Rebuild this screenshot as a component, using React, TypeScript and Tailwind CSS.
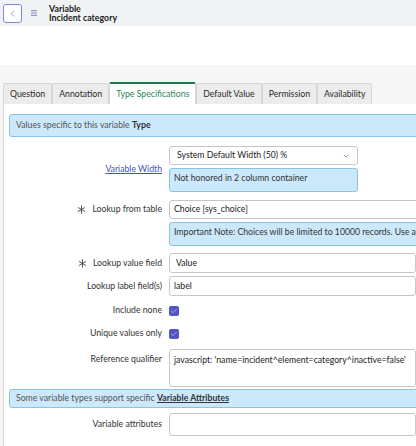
import { ChevronLeft, ChevronDown, Menu, Check } from "lucide-react";

const tabs = [
  "Question",
  "Annotation",
  "Type Specifications",
  "Default Value",
  "Permission",
  "Availability",
];

function Req() {
  return (
    <svg viewBox="0 0 10 10" className="w-[9px] h-[9px] mr-[6px] text-[#444]">
      <g stroke="currentColor" strokeWidth="1" strokeLinecap="round">
        <line x1="5" y1="0.8" x2="5" y2="9.2" />
        <line x1="1.4" y1="2.9" x2="8.6" y2="7.1" />
        <line x1="1.4" y1="7.1" x2="8.6" y2="2.9" />
      </g>
    </svg>
  );
}

function Label({ children, required }: { children: React.ReactNode; required?: boolean }) {
  return (
    <div className="w-[165px] shrink-0 flex items-center justify-end pr-[7px] text-[#333]">
      {required && <Req />}
      <span>{children}</span>
    </div>
  );
}

function Box({ children, className = "" }: { children: React.ReactNode; className?: string }) {
  return (
    <div
      className={`bg-[#cce8fb] border border-[#8cc2e6] rounded-[3px] text-[#333] ${className}`}
    >
      {children}
    </div>
  );
}

function Check2() {
  return (
    <div className="w-[10px] h-[10px] rounded-[2px] bg-[#5254c4] flex items-center justify-center">
      <Check className="w-[8px] h-[8px] text-[#e8e8ff]" strokeWidth={1.6} />
    </div>
  );
}

export default function App() {
  return (
    <div
      className="w-[416px] h-[446px] overflow-hidden bg-white text-[8.7px] leading-none"
      style={{ fontFamily: "Lato, 'Noto Sans', sans-serif" }}
    >
      {/* header */}
      <div className="h-[26px] bg-[#f1f2f3] flex items-center pl-[3px]">
        <button className="w-[19px] h-[19px] bg-white border border-[#8485d8] rounded-[3px] flex items-center justify-center">
          <ChevronLeft className="w-[11px] h-[11px] text-[#6d6ec9]" strokeWidth={1.5} />
        </button>
        <Menu className="w-[8px] h-[8px] ml-[8px] text-[#5a5fa8]" strokeWidth={2.2} />
        <div className="ml-[11px] font-bold text-[#1d1d1d] text-[8.8px] leading-[9.5px]">
          <div>Variable</div>
          <div>Incident category</div>
        </div>
      </div>
      <div className="h-[39px] bg-white" />

      {/* form area */}
      <div className="bg-[#f6f6f6] pt-[17px] pl-[3px] h-[381px]">
        <div className="flex items-end h-[22px]">
          {tabs.map((t) => {
            const active = t === "Type Specifications";
            return (
              <div
                key={t}
                className={
                  active
                    ? "h-[22px] px-[6px] flex items-center bg-white border-t-2 border-[#1d7a4e] border-x border-x-[#d6d6d6] text-[#2a8a5a] rounded-t-[2px]"
                    : "h-[21px] px-[6px] flex items-center bg-[#ececec] border border-b-0 border-[#d6d6d6] text-[#2b2b2b] rounded-t-[2px]"
                }
              >
                {t}
              </div>
            );
          })}
        </div>

        <div className="bg-white border-l border-[#d6d6d6] h-full pt-[10px] pl-[5px]">
          <Box className="h-[23px] w-[420px] flex items-center pl-[6px] text-[#555]">
            Values specific to this variable&nbsp;<span className="font-bold text-[#333]">Type</span>
          </Box>

          <div className="flex mt-[9px] -ml-[5px]">
            <Label>
              <span className="text-[#3d52c9] underline">Variable Width</span>
            </Label>
            <div>
              <div className="w-[189px] h-[19px] border border-[#c6c6c6] rounded-[3px] flex items-center justify-between px-[7px] text-[#222]">
                <span>System Default Width (50) %</span>
                <ChevronDown className="w-[8px] h-[8px] text-[#666]" />
              </div>
              <Box className="w-[189px] h-[24px] mt-[3px] pl-[4px] pt-[5px]">Not honored in 2 column container</Box>
            </div>
          </div>

          <div className="flex mt-[8px] -ml-[5px]">
            <div className="h-[19px] flex">
              <Label required>Lookup from table</Label>
            </div>
            <div>
              <div className="w-[300px] h-[19px] border border-[#c6c6c6] rounded-[3px] flex items-center px-[4px] text-[#222]">
                Choice [sys_choice]
              </div>
              <Box className="w-[300px] h-[24px] mt-[3px] pl-[4px] pt-[5px] whitespace-nowrap overflow-hidden">
                Important Note: Choices will be limited to 10000 records. Use a
              </Box>
            </div>
          </div>

          <div className="flex mt-[7px] -ml-[5px] h-[20px]">
            <Label required>Lookup value field</Label>
            <div className="w-[300px] h-[20px] border border-[#c6c6c6] rounded-[3px] flex items-center px-[6px] text-[#222]">
              Value
            </div>
          </div>

          <div className="flex mt-[3px] -ml-[5px] h-[20px]">
            <Label>Lookup label field(s)</Label>
            <div className="w-[300px] h-[20px] border border-[#c6c6c6] rounded-[3px] flex items-center px-[4px] text-[#222]">
              label
            </div>
          </div>

          <div className="flex mt-[3px] -ml-[5px] h-[23px] items-center">
            <Label>Include none</Label>
            <Check2 />
          </div>

          <div className="flex mt-[0px] -ml-[5px] h-[23px] items-center">
            <Label>Unique values only</Label>
            <Check2 />
          </div>

          <div className="flex mt-[4px] -ml-[5px]">
            <div className="w-[165px] shrink-0 text-right pr-[7px] pt-[6px] text-[#333]">Reference qualifier</div>
            <div className="w-[300px] h-[38px] border border-[#c6c6c6] rounded-[3px] px-[4px] pt-[6px] text-[#222] whitespace-nowrap">
              javascript: 'name=incident^element=category^inactive=false'
            </div>
          </div>

          <Box className="h-[19px] w-[420px] mt-[2px] flex items-center pl-[6px] text-[#555]">
            Some variable types support specific&nbsp;
            <span className="font-bold text-[#333] underline">Variable Attributes</span>
          </Box>

          <div className="flex mt-[5px] -ml-[5px] h-[23px]">
            <Label>Variable attributes</Label>
            <div className="w-[300px] h-[23px] border border-[#c6c6c6] rounded-[3px]" />
          </div>
        </div>
      </div>
    </div>
  );
}
